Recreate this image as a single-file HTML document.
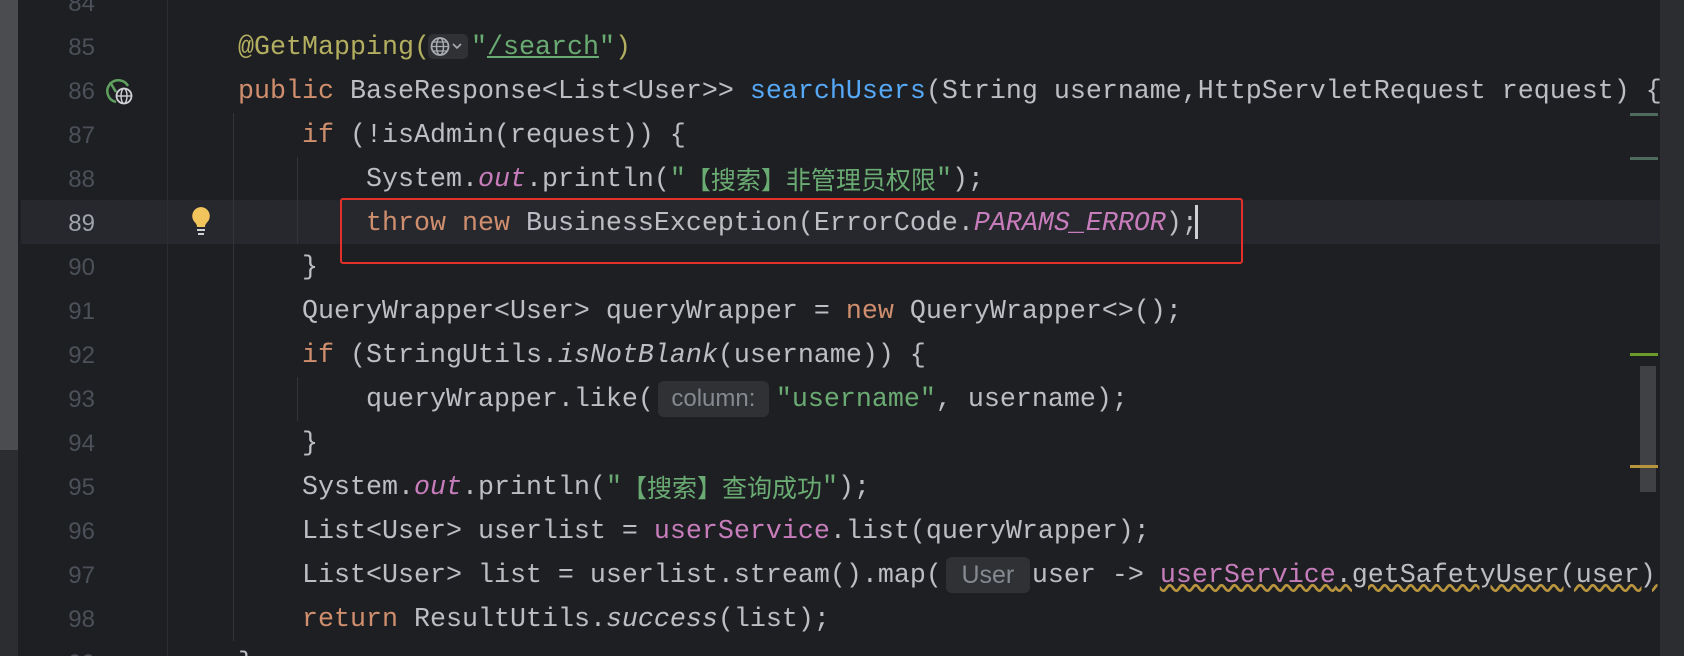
<!DOCTYPE html>
<html style="overflow:hidden;height:656px"><head><meta charset="utf-8"><style>
body{margin:0;width:1684px;height:656px;background:#1e1f22;overflow:hidden;position:relative;font-family:"Liberation Mono","Noto Sans CJK SC",monospace;}
.ln{position:absolute;left:0;width:95px;text-align:right;font-family:"Liberation Sans",sans-serif;font-size:24px;color:#4b5059;height:44px;line-height:44px}
.c{position:absolute;left:238px;height:44px;line-height:44px;font-size:26.67px;color:#bcbec4;white-space:pre}
.k{color:#cf8e6d}.a{color:#b3ae60}.s{color:#6aab73}.m{color:#56a8f5}.p{color:#c77dbb}.i{font-style:italic}
.cj{font-family:"Noto Sans CJK SC",sans-serif;font-size:25px;display:inline-block;height:44px;line-height:42px;vertical-align:top}
.hint{display:inline-block;background:#2f3134;color:#858991;font-family:"Liberation Sans",sans-serif;font-size:24px;line-height:36px;height:36px;border-radius:6px;vertical-align:middle;text-align:center}
.g{position:absolute;width:1px;background:#313438}
</style></head><body>
<div style="position:absolute;left:0;top:0;width:18px;height:656px;background:#2b2d30"></div>
<div style="position:absolute;left:0;top:0;width:18px;height:450px;background:#4a4c50"></div>
<div style="position:absolute;left:21px;top:200px;width:1639px;height:44px;background:#26282e"></div>
<div style="position:absolute;left:167px;top:0;width:1px;height:656px;background:#2b2d30"></div>
<div style="position:absolute;left:1660px;top:0;width:24px;height:656px;background:#2b2d30"></div>
<div style="position:absolute;left:1630px;top:113px;width:28px;height:3px;background:#4e6b5e"></div>
<div style="position:absolute;left:1630px;top:157px;width:28px;height:3px;background:#4e6b5e"></div>
<div style="position:absolute;left:1630px;top:353px;width:28px;height:3px;background:#6b9b2b"></div>
<div style="position:absolute;left:1640px;top:366px;width:16px;height:126px;background:#404145"></div>
<div style="position:absolute;left:1630px;top:465px;width:28px;height:3px;background:#b8943f"></div>
<div class="g" style="left:233px;top:113px;height:528px"></div>
<div class="g" style="left:297px;top:157px;height:87px"></div>
<div class="g" style="left:297px;top:377px;height:44px"></div>

<div class="ln" style="top:-18px">84</div>
<div class="ln" style="top:26px">85</div>
<div class="ln" style="top:70px">86</div>
<div class="ln" style="top:114px">87</div>
<div class="ln" style="top:158px">88</div>
<div class="ln" style="top:202px;color:#a1a3ab">89</div>
<div class="ln" style="top:246px">90</div>
<div class="ln" style="top:290px">91</div>
<div class="ln" style="top:334px">92</div>
<div class="ln" style="top:378px">93</div>
<div class="ln" style="top:422px">94</div>
<div class="ln" style="top:466px">95</div>
<div class="ln" style="top:510px">96</div>
<div class="ln" style="top:554px">97</div>
<div class="ln" style="top:598px">98</div>
<div class="ln" style="top:642px;height:14px;overflow:hidden">99</div>

<svg style="position:absolute;left:104px;top:76px" width="32" height="30" viewBox="0 0 32 30"><path d="M12 26 A11 11 0 1 1 24 10" fill="none" stroke="#5fa05f" stroke-width="2.5"/><path d="M6 6 L12 16" stroke="#5fa05f" stroke-width="2.5"/><circle cx="20" cy="20" r="7.5" fill="#1e1f22" stroke="#cfd1d6" stroke-width="1.8"/><ellipse cx="20" cy="20" rx="3" ry="7.5" fill="none" stroke="#cfd1d6" stroke-width="1.4"/><path d="M12.5 20h15" stroke="#cfd1d6" stroke-width="1.4"/></svg>
<svg style="position:absolute;left:189px;top:205px" width="24" height="32" viewBox="0 0 24 32"><path d="M12 2a9 9 0 0 0-6 15.5c1.5 1.5 2 3 2 4.5h8c0-1.5.5-3 2-4.5A9 9 0 0 0 12 2z" fill="#f2c55c"/><rect x="8" y="24" width="8" height="2" fill="#cfd1d6"/><rect x="9" y="28" width="6" height="2" fill="#cfd1d6"/></svg>

<div class="c" style="top:26px"><span class="a">@GetMapping(</span><span style="display:inline-block;vertical-align:middle;width:40px;height:25px;background:#2f3134;border-radius:5px;position:relative;margin:0 3px 0 -2px"><svg style="position:absolute;left:2px;top:2px" width="36" height="21" viewBox="0 0 36 21"><circle cx="10" cy="10.5" r="8.5" fill="none" stroke="#a8abb1" stroke-width="1.8"/><ellipse cx="10" cy="10.5" rx="3.5" ry="8.5" fill="none" stroke="#a8abb1" stroke-width="1.5"/><path d="M1.5 10.5h17M3 6h14M3 15h14" stroke="#a8abb1" stroke-width="1.3"/><path d="M23 8l4 4 4-4" fill="none" stroke="#a8abb1" stroke-width="1.6"/></svg></span><span class="s">"<span style="text-decoration:underline">/search</span>"</span><span class="a">)</span></div>
<div class="c" style="top:70px"><span class="k">public</span> BaseResponse&lt;List&lt;User&gt;&gt; <span class="m">searchUsers</span>(String username,HttpServletRequest request) {</div>
<div class="c" style="top:114px">    <span class="k">if</span> (!isAdmin(request)) {</div>
<div class="c" style="top:158px">        System.<span class="p i">out</span>.println(<span class="s">"<span class="cj">【搜索】非管理员权限</span>"</span>);</div>
<div class="c" style="top:202px">        <span class="k">throw new</span> BusinessException(ErrorCode.<span class="p i">PARAMS_ERROR</span>);</div>
<div style="position:absolute;left:1195px;top:205px;width:3px;height:34px;background:#ced0d6"></div>
<div style="position:absolute;left:340px;top:198px;width:899px;height:62px;border:2.5px solid #e3302a;border-radius:3px"></div>
<div class="c" style="top:246px">    }</div>
<div class="c" style="top:290px">    QueryWrapper&lt;User&gt; queryWrapper = <span class="k">new</span> QueryWrapper&lt;&gt;();</div>
<div class="c" style="top:334px">    <span class="k">if</span> (StringUtils.<span class="i">isNotBlank</span>(username)) {</div>
<div class="c" style="top:378px">        queryWrapper.like(<span class="hint" style="width:111px;margin:0 7px 0 4px">column:</span><span class="s">"username"</span>, username);</div>
<div class="c" style="top:422px">    }</div>
<div class="c" style="top:466px">    System.<span class="p i">out</span>.println(<span class="s">"<span class="cj">【搜索】查询成功</span>"</span>);</div>
<div class="c" style="top:510px">    List&lt;User&gt; userlist = <span class="p">userService</span>.list(queryWrapper);</div>
<div class="c" style="top:554px;width:1422px;overflow:hidden">    List&lt;User&gt; list = userlist.stream().map(<span class="hint" style="width:84px;margin:0 2px 0 4px;font-size:25px">User</span>user -&gt; <span style="text-decoration:underline wavy #b8943f"><span class="p">userService</span>.getSafetyUser(user)).collect(Collectors.toList());</span></div>
<div class="c" style="top:598px">    <span class="k">return</span> ResultUtils.<span class="i">success</span>(list);</div>
<div class="c" style="top:642px;height:14px;overflow:hidden">}</div>
</body></html>
